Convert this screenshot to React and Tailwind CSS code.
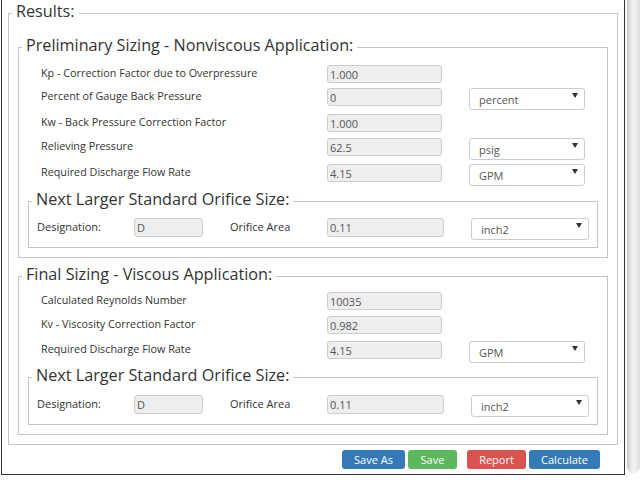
import React from 'react';

const inputCls =
  'h-[18px] rounded-[3px] border border-[#ccc] bg-[#eee] px-[2px] text-[11px] leading-[16px] text-[#555] outline-none';

function Select({ value, w }) {
  return (
    <div className={`relative h-[22px] ${w}`}>
      <select
        defaultValue={value}
        className="block h-[22px] w-full appearance-none rounded-[3px] border border-[#ccc] bg-white pl-[9px] pt-[3px] text-[11px] text-[#555] outline-none"
      >
        <option>{value}</option>
      </select>
      <svg className="pointer-events-none absolute right-[7px] top-[5px]" width="6" height="5" viewBox="0 0 6 5">
        <path d="M0 0h6L3 5z" fill="#333" />
      </svg>
    </div>
  );
}

function Row({ label, value, unit, h }) {
  return (
    <div className={`flex items-start ${h}`}>
      <div className="w-[286px] h-[18px] text-[10.8px] leading-[16px] text-[#333]">{label}</div>
      <input readOnly value={value} className={`${inputCls} w-[115px]`} />
      {unit && (
        <div className="ml-[27px]">
          <Select value={unit} w="w-[116px]" />
        </div>
      )}
    </div>
  );
}

function Legend({ children }) {
  return <legend className="ml-[3px] px-[4px] pb-[3px] text-[16.2px] leading-[21px] text-[#333]">{children}</legend>;
}

function Orifice({ pt }) {
  return (
    <fieldset className="border border-[#c4c4c4]">
      <Legend>Next Larger Standard Orifice Size:</Legend>
      <div className={`pl-[8px] pb-[10px] ${pt}`}>
        <div className="flex items-start h-[19px]">
          <div className="w-[97px] h-[19px] text-[11px] leading-[17px] text-[#333]">Designation:</div>
          <input readOnly value="D" className={`${inputCls} h-[19px] w-[69px]`} />
          <div className="ml-[27px] w-[97px] h-[19px] text-[11px] leading-[17px] text-[#333]">Orifice Area</div>
          <input readOnly value="0.11" className={`${inputCls} h-[19px] w-[117px]`} />
          <div className="ml-[27px]">
            <Select value="inch2" w="w-[118px]" />
          </div>
        </div>
      </div>
    </fieldset>
  );
}

export default function App() {
  return (
    <div className="flex w-[640px] h-[480px] overflow-hidden bg-white font-['Open_Sans',sans-serif]">
      <div className="ml-px w-[624px] h-[475px] flex flex-col border-x border-b border-[#333] pt-[1px]">
        <fieldset className="mx-[6px] border border-[#c4c4c4]">
          <Legend>Results:</Legend>
          <div className="px-[9px] pt-[10px] pb-[9px]">
            <fieldset className="border border-[#c4c4c4]">
              <Legend>Preliminary Sizing - Nonviscous Application:</Legend>
              <div className="px-[9px] pt-[6px] pb-[9px]">
                <div className="pl-[13px]">
                  <Row label="Kp - Correction Factor due to Overpressure" value="1.000" h="h-[23px]" />
                  <Row label="Percent of Gauge Back Pressure" value="0" unit="percent" h="h-[26px]" />
                  <Row label="Kw - Back Pressure Correction Factor" value="1.000" h="h-[24px]" />
                  <Row label="Relieving Pressure" value="62.5" unit="psig" h="h-[26px]" />
                  <Row label="Required Discharge Flow Rate" value="4.15" unit="GPM" h="h-[25px]" />
                </div>
                <Orifice pt="pt-[5px]" />
              </div>
            </fieldset>

            <fieldset className="mt-[6px] border border-[#c4c4c4]">
              <Legend>Final Sizing - Viscous Application:</Legend>
              <div className="px-[9px] pt-[4px] pb-[9px]">
                <div className="pl-[13px]">
                  <Row label="Calculated Reynolds Number" value="10035" h="h-[24px]" />
                  <Row label="Kv - Viscosity Correction Factor" value="0.982" h="h-[25px]" />
                  <Row label="Required Discharge Flow Rate" value="4.15" unit="GPM" h="h-[24px]" />
                </div>
                <Orifice pt="pt-[6px]" />
              </div>
            </fieldset>
          </div>
        </fieldset>

        <div className="mt-[5px] mr-[24px] flex justify-end text-[11px] leading-[19px] text-white">
          <button className="h-[19px] w-[63px] rounded-[3px] bg-[#337ab7]">Save As</button>
          <button className="ml-[3px] h-[19px] w-[49px] rounded-[3px] bg-[#5cb85c]">Save</button>
          <button className="ml-[10px] h-[19px] w-[59px] rounded-[3px] bg-[#d9534f]">Report</button>
          <button className="ml-[3px] h-[19px] w-[71px] rounded-[3px] bg-[#337ab7]">Calculate</button>
        </div>
      </div>
      <div className="ml-[2px] w-[13px] h-[473px] rounded-b-[7px] bg-[linear-gradient(to_right,#c6c6c6,#ececec_35%,#f2f2f2_55%,#dcdcdc)]" />
    </div>
  );
}
